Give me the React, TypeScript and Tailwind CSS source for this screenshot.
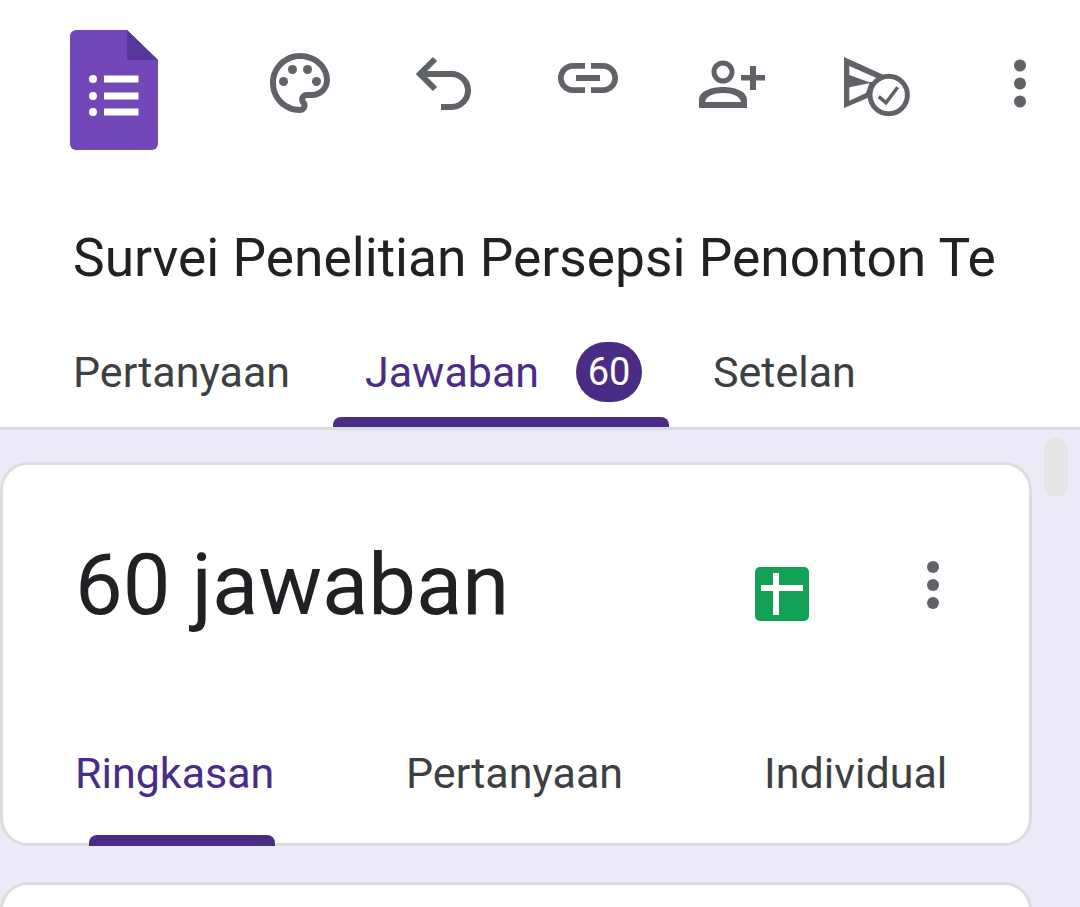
const font = { fontFamily: 'Roboto, sans-serif' }

function FormsLogo() {
  return (
    <svg width="88" height="120" viewBox="0 0 88 120" className="shrink-0">
      <path d="M6 0h51l31 30v84a6 6 0 0 1-6 6H6a6 6 0 0 1-6-6V6a6 6 0 0 1 6-6z" fill="#7248b9" />
      <path d="M57 0l31 30H57z" fill="#56389c" />
      <circle cx="23" cy="49" r="4" fill="#fff" />
      <circle cx="23" cy="66" r="4" fill="#fff" />
      <circle cx="23" cy="82" r="4" fill="#fff" />
      <path d="M34 45.500h34.500v7H34zM34 62.500h34.500v7H34zM34 78.500h34.500v7H34z" fill="#fff" />
    </svg>
  )
}

function ToolbarIcon({ children, viewBox = '0 0 24 24' }: { children: React.ReactNode; viewBox?: string }) {
  return (
    <div className="w-[144px] shrink-0 flex justify-center">
      <svg width="72" height="72" viewBox={viewBox} fill="#5f6368">
        {children}
      </svg>
    </div>
  )
}

function DotsIcon() {
  return (
    <svg width="72" height="72" viewBox="0 0 72 72" fill="#5f6368">
      <circle cx="36" cy="18" r="6" />
      <circle cx="36" cy="36" r="6" />
      <circle cx="36" cy="54" r="6" />
    </svg>
  )
}

function SheetsIcon() {
  return (
    <svg width="54" height="54" viewBox="0 0 54 54">
      <rect width="54" height="54" rx="5" fill="#12a155" />
      <path d="M6 18h12V6h6v12h24v6H24v24h-6V24H6z" fill="#fff" />
    </svg>
  )
}

export default function App() {
  return (
    <div className="w-[1080px] h-[907px] overflow-hidden bg-white flex flex-col text-[#3c4043]" style={font}>
      <header className="shrink-0 bg-white">
        <div className="flex items-start pt-[30px] pl-[70px]">
          <FormsLogo />
          <div className="flex items-start ml-[70px] pt-[17px]">
            <ToolbarIcon>
              <path d="M12 22C6.490 22 2 17.510 2 12S6.490 2 12 2s10 4.040 10 9c0 3.310-2.690 6-6 6h-1.770c-.28 0-.5.22-.5.5 0 .12.05.23.13.33.41.47.64 1.060.64 1.670 0 1.380-1.120 2.500-2.500 2.500zm0-18c-4.410 0-8 3.590-8 8s3.590 8 8 8c.28 0 .5-.22.5-.5 0-.16-.08-.28-.14-.35-.41-.46-.63-1.050-.63-1.650 0-1.380 1.120-2.500 2.500-2.500H16c2.210 0 4-1.790 4-4 0-3.860-3.590-7-8-7z" />
              <circle cx="6.500" cy="11.500" r="1.500" />
              <circle cx="9.500" cy="7.500" r="1.500" />
              <circle cx="14.500" cy="7.500" r="1.500" />
              <circle cx="17.500" cy="11.500" r="1.500" />
            </ToolbarIcon>
            <ToolbarIcon>
              <path d="M9 14 4 9l5-5M4 9h10.500a5.500 5.500 0 0 1 0 11H11" fill="none" stroke="#5f6368" strokeWidth="2" />
            </ToolbarIcon>
            <ToolbarIcon viewBox="0 1.670 24 24">
              <path d="M3.900 12c0-1.710 1.390-3.100 3.100-3.100h4V7H7c-2.760 0-5 2.240-5 5s2.240 5 5 5h4v-1.900H7c-1.710 0-3.100-1.390-3.100-3.100zM8 13h8v-2H8v2zm9-6h-4v1.900h4c1.710 0 3.100 1.390 3.100 3.100s-1.390 3.100-3.100 3.100h-4V17h4c2.760 0 5-2.240 5-5s-2.240-5-5-5z" />
            </ToolbarIcon>
            <ToolbarIcon viewBox="0 0 72 72">
              <circle cx="27" cy="25" r="9" fill="none" stroke="#5f6368" strokeWidth="5" />
              <path
                fillRule="evenodd"
                d="M3 61v-8c0-9 12-13 24-13s24 4 24 13v8zM9 55h36c-1-6-9-9-18-9S10 49 9 55z"
              />
              <path d="M45 28h9V19h6v9h9v5.500h-9V43h-6v-9.500H45z" />
            </ToolbarIcon>
            <ToolbarIcon viewBox="0 0 72 72">
              <path
                fillRule="evenodd"
                d="M4 10 46 29 30 50 4 61zM9.300 19 41 33 29.300 35.300 9.300 28zM9.300 40.300 29.300 36.300 26 46 9.300 53.700z"
              />
              <circle cx="48.700" cy="48" r="18.700" fill="#fff" stroke="#5f6368" strokeWidth="5" />
              <path d="M38.700 49.700 46 55.700 57.700 40.300" fill="none" stroke="#5f6368" strokeWidth="3.500" />
            </ToolbarIcon>
            <ToolbarIcon viewBox="0 0 72 72">
              <circle cx="36" cy="18.500" r="6" />
              <circle cx="36" cy="36.500" r="6" />
              <circle cx="36" cy="54.500" r="6" />
            </ToolbarIcon>
          </div>
        </div>

        <h1 className="mt-[76px] pl-[73px] text-[53.300px] leading-[64px] font-normal text-[#202124] whitespace-nowrap overflow-hidden">
          Survei Penelitian Persepsi Penonton Te
        </h1>

        <nav className="flex items-stretch mt-[37px] border-b-[3px] border-[#dadce0] h-[103px] text-[43px] leading-[50px] font-[450]">
          <div className="pl-[73px] w-[333px] h-[90px] flex items-center">Pertanyaan</div>
          <div className="w-[336px] flex flex-col">
            <div className="flex items-center pl-[32px] h-[90px]">
              <span className="text-[#4a2c86]">Jawaban</span>
              <span className="ml-[37px] w-[66px] h-[60px] rounded-full bg-[#4a2c86] text-white text-[38px] font-normal flex items-center justify-center">
                60
              </span>
            </div>
            <div className="h-[10px] rounded-t-[8px] bg-[#4a2c86]" />
          </div>
          <div className="pl-[44px] h-[90px] flex items-center">Setelan</div>
        </nav>
      </header>

      <main className="flex-1 bg-[#ede9f7] relative">
        <div className="absolute right-[12px] top-[8px] w-[24px] h-[59px] rounded-full bg-[#e3e6e4]" />

        <section className="mt-[32px] w-[1032px] h-[384px] bg-white rounded-[28px] border-[3px] border-[#dadce0] flex flex-col">
          <div className="flex items-start pl-[72px] pt-[75px]">
            <div className="text-[85px] leading-[90px] text-[#202124] w-[680px]">60 jawaban</div>
            <div className="mt-[27px]">
              <SheetsIcon />
            </div>
            <div className="mt-[9px] ml-[88px]">
              <DotsIcon />
            </div>
          </div>
          <div className="flex items-start mt-auto -mb-[3px] h-[96px] text-[43px] leading-[46px] font-[450]">
            <div className="w-[403px] h-full pl-[72px] flex flex-col">
              <span className="text-[#4a2c86]">Ringkasan</span>
              <div className="mt-auto ml-[14px] w-[186px] h-[11px] rounded-t-[8px] bg-[#4a2c86]" />
            </div>
            <span className="w-[358px]">Pertanyaan</span>
            <span>Individual</span>
          </div>
        </section>

        <section className="mt-[36px] w-[1032px] h-[200px] bg-white rounded-[28px] border-[3px] border-[#dadce0]" />
      </main>
    </div>
  )
}
